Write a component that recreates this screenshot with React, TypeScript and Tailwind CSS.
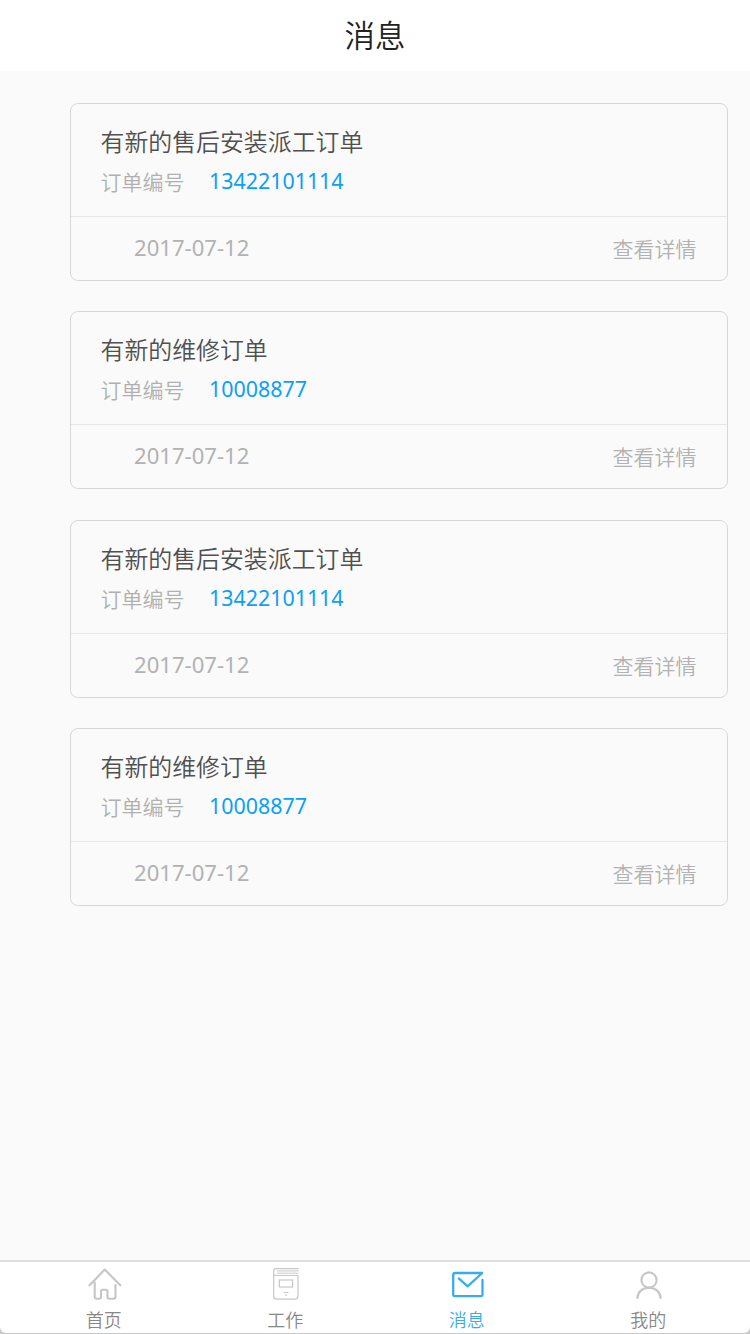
import type { ReactNode } from "react";

const messages = [
  { title: "有新的售后安装派工订单", order: "13422101114", date: "2017-07-12" },
  { title: "有新的维修订单", order: "10008877", date: "2017-07-12" },
  { title: "有新的售后安装派工订单", order: "13422101114", date: "2017-07-12" },
  { title: "有新的维修订单", order: "10008877", date: "2017-07-12" },
];

function HomeIcon() {
  return (
    <svg className="shrink-0" width="36" height="36" viewBox="0 0 36 36" fill="none" stroke="#c6c6c6" strokeWidth="2.1" strokeLinecap="round" strokeLinejoin="round">
      <path d="M3.500 18.300 18.800 2.500l15.500 15.800" />
      <path d="M8.700 15.500v14q0 2.200 2.200 2.200h2.400q1.700 0 1.700-1.700v-5.700q0-1.600 1.600-1.600h3.300q1.600 0 1.600 1.600v5.700q0 1.700 1.700 1.700h4q2.300 0 2.300-2.200V18" />
    </svg>
  );
}

function WorkIcon() {
  return (
    <svg className="shrink-0" width="36" height="36" viewBox="0 0 36 36" fill="none" stroke="#c8c8c8" strokeWidth="1.2">
      <path d="M31.500 1.600H9Q6.700 1.600 6.700 4v25.200q0 3 3 3H28q3 0 3-3V8.500H9q-2.300 0-2.300-2.500" />
      <path d="M10 3.900h21.500M10 6.200h21.500" strokeWidth="1" />
      <rect x="12.300" y="13" width="13.300" height="7" />
      <path d="M16.500 25.500h5M17.800 27.700l1.200.9 1.200-.9" strokeWidth="1" />
    </svg>
  );
}

function MailIcon() {
  return (
    <svg className="shrink-0" width="36" height="36" viewBox="0 0 36 36" fill="none" stroke="#38adee" strokeWidth="2.300" strokeLinecap="round" strokeLinejoin="round">
      <path d="M33.500 12.800V27.200q0 2-2 2H6.200q-2 0-2-2V8q0-2 2-2h27L18.600 19.300l-8.800-7.900" />
    </svg>
  );
}

function UserIcon() {
  return (
    <svg className="shrink-0" width="36" height="36" viewBox="0 0 36 36" fill="none" stroke="#c6c6c6" strokeWidth="2.100" strokeLinecap="round">
      <circle cx="19" cy="13" r="7.600" />
      <path d="M7.500 31c0-5.900 4.800-10.300 11.500-10.300S30.500 25.100 30.500 31" />
    </svg>
  );
}

const tabs: { label: string; icon: ReactNode; active?: boolean }[] = [
  { label: "首页", icon: <HomeIcon /> },
  { label: "工作", icon: <WorkIcon /> },
  { label: "消息", icon: <MailIcon />, active: true },
  { label: "我的", icon: <UserIcon /> },
];

export default function App() {
  return (
    <div className="flex h-[1334px] w-[750px] flex-col overflow-hidden bg-[#fafafa] font-['Noto_Sans','Noto_Sans_CJK_SC',sans-serif] font-[350]">
      <header className="flex h-[71px] shrink-0 items-center justify-center bg-white pt-px">
        <h1 className="text-[30.400px] leading-[72px] font-[350] text-[#222]">消息</h1>
      </header>
      <main className="flex grow flex-col gap-[30.4px] pt-8 pr-[22px] pl-[70px]">
        {messages.map((m, i) => (
          <article key={i} className="flex h-[178px] flex-col rounded-lg border-[1.5px] border-[#d8d8d8]">
            <div className="flex h-28 shrink-0 flex-col pt-5 pl-[29.500px]">
              <h2 className="text-[23.9px] leading-9 font-[350] text-[#505050]">{m.title}</h2>
              <p className="flex items-start">
                <span className="w-[108.500px] text-[21px] leading-[44px] text-[#b0b0b0]">订单编号</span>
                <span className="text-[21.400px] leading-[42px] font-normal text-[#0aa0f8]">{m.order}</span>
              </p>
            </div>
            <div className="flex grow items-center justify-between border-t border-[#e6e6e6] pr-[30.500px] pl-[63px] text-[#b2b2b2]">
              <time className="pb-0.5 text-[22.100px] font-normal">{m.date}</time>
              <button className="pt-0.5 text-[21px]">查看详情</button>
            </div>
          </article>
        ))}
      </main>
      <div className="h-[74px] shrink-0 bg-[#c8c8c8]">
        <nav className="flex h-[73px] rounded-b-md border-t-2 border-[#dfdfdf] bg-white pr-[11px] pl-[13px]">
          {tabs.map((tab) => (
            <button key={tab.label} className="flex flex-1 flex-col items-center pt-[5px]">
              {tab.icon}
              <span className={tab.active ? "mt-[5px] text-[18px] leading-[25px] text-[#38adee]" : "mt-[5px] text-[18px] leading-[25px] text-[#888]"}>{tab.label}</span>
            </button>
          ))}
        </nav>
      </div>
    </div>
  );
}
